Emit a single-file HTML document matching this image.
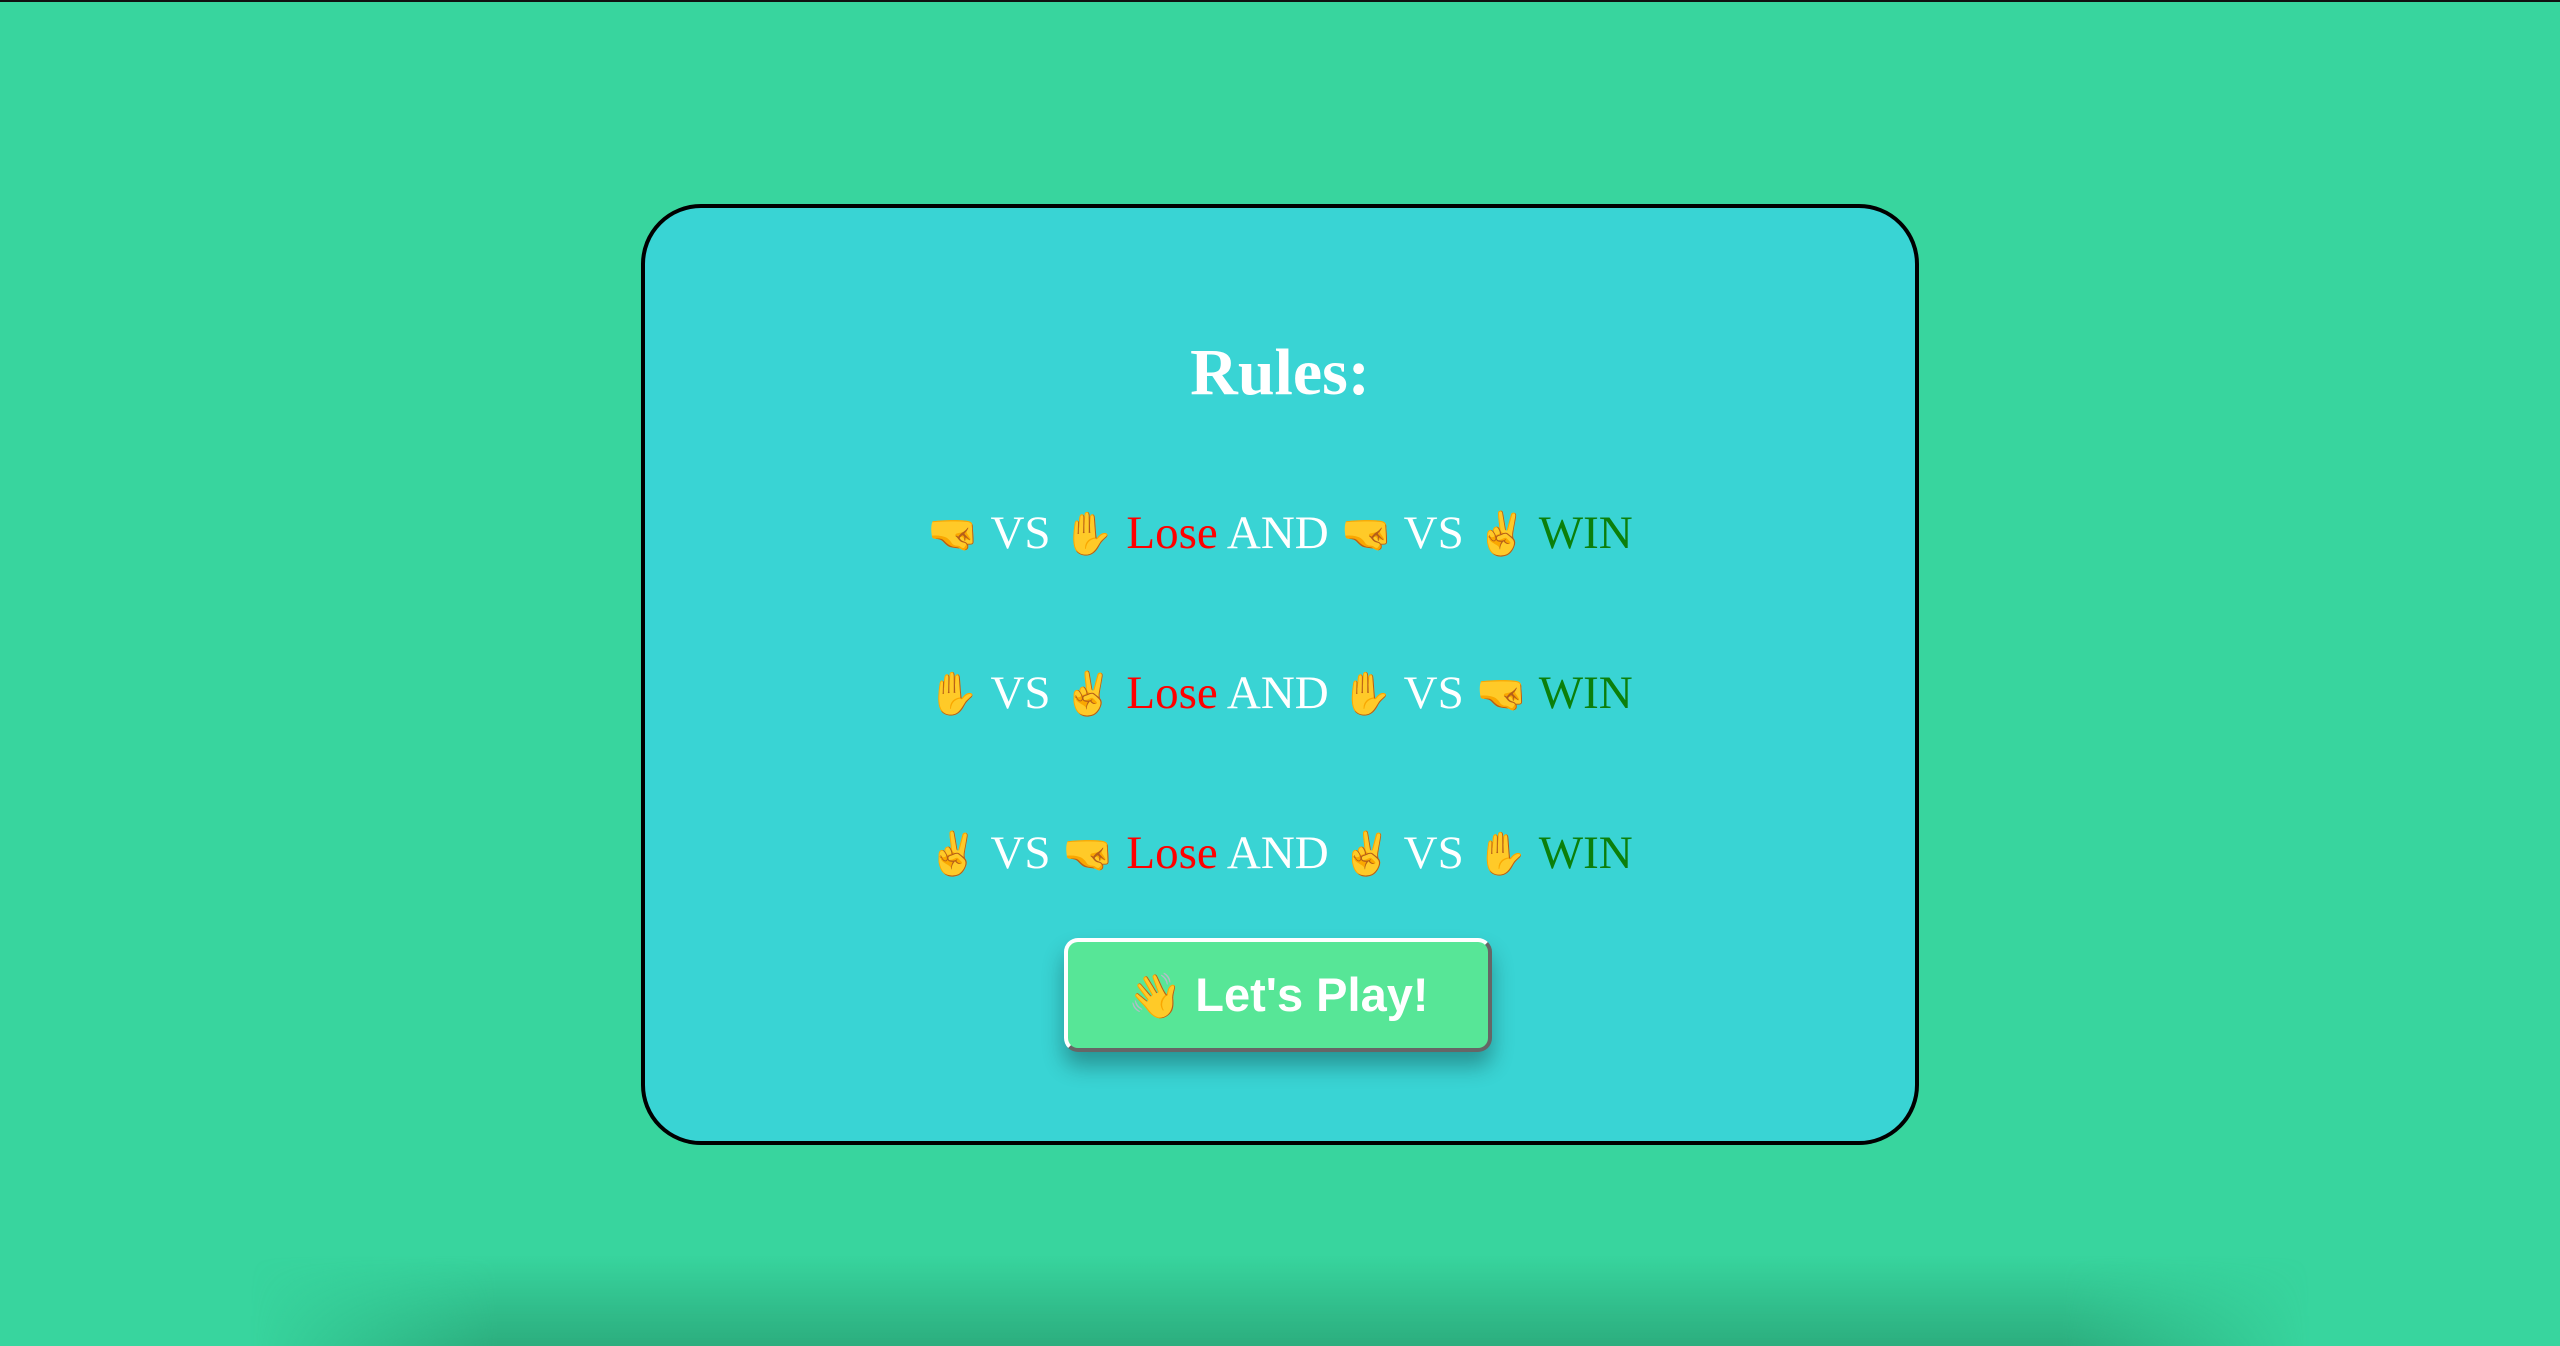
<!DOCTYPE html>
<html><head><meta charset="utf-8"><style>
html,body{margin:0;padding:0;width:2560px;height:1346px;overflow:hidden;background:#38d59e;position:relative}
.topline{position:absolute;left:0;top:0;width:2560px;height:2px;background:#111}
.shadow{position:absolute;left:250px;width:2060px;top:1256px;height:90px;
background:linear-gradient(to bottom,rgba(40,150,110,0),rgba(40,160,115,0.75));
-webkit-mask-image:linear-gradient(to right,transparent 0,#000 12%,#000 88%,transparent 100%);
mask-image:linear-gradient(to right,transparent 0,#000 12%,#000 88%,transparent 100%)}
.card{position:absolute;left:641px;top:204px;width:1270px;height:933px;border:4px solid #000;border-radius:60px;background:#39d4d4;
font-family:"Liberation Serif",serif;color:#fff;text-align:center}
h1{position:absolute;left:0;right:0;margin:0;font-size:66px;font-weight:bold;line-height:1}
.row{position:absolute;left:0;right:0;font-size:47px;line-height:1;white-space:nowrap}
.l{color:#ff0000}.w{color:#0b7f0b}
.e{font-family:"Noto Color Emoji","DejaVu Sans",sans-serif;font-size:42px}
.btn{position:absolute;left:419px;top:730px;width:428px;height:114px;box-sizing:border-box;background:#57e697;border-radius:14px;
border:4px solid;border-color:#fff #666 #666 #fff;box-shadow:0 14px 22px rgba(0,0,0,0.3);
font-family:"Liberation Sans",sans-serif;font-weight:bold;font-size:47px;line-height:106px;color:#fff}
.btn .e{font-size:44px}
</style></head><body>
<div class="topline"></div>
<div class="shadow"></div>
<div class="card">
<h1 style="top:132px">Rules:</h1>
<div class="row" style="top:302px"><span class="e">🤜</span> VS <span class="e">✋</span> <span class="l">Lose</span> AND <span class="e">🤜</span> VS <span class="e">✌</span> <span class="w">WIN</span></div>
<div class="row" style="top:462px"><span class="e">✋</span> VS <span class="e">✌</span> <span class="l">Lose</span> AND <span class="e">✋</span> VS <span class="e">🤜</span> <span class="w">WIN</span></div>
<div class="row" style="top:622px"><span class="e">✌</span> VS <span class="e">🤜</span> <span class="l">Lose</span> AND <span class="e">✌</span> VS <span class="e">✋</span> <span class="w">WIN</span></div>
<div class="btn"><span class="e">👋</span> Let's Play!</div>
</div>
</body></html>
